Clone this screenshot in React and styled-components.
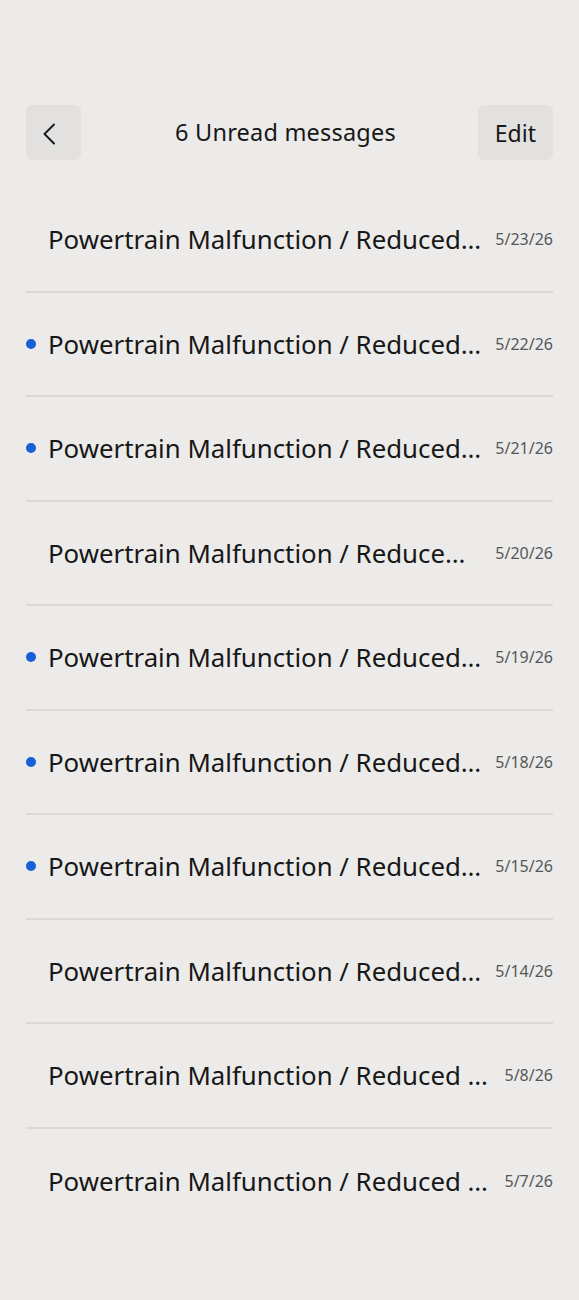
import React from 'react';
import { styled, createGlobalStyle } from 'styled-components';

const GlobalStyle = createGlobalStyle`
    html, body {
        margin: 0;
        padding: 0;
        background-color: #ECEBE9;
    }
    body {
        font-family: "Noto Sans", "Open Sans", sans-serif;
        color: #171717;
    }
`;

const Page = styled.div`
    min-height: 1300px;
    padding: 105px 26px 0 26px;
    box-sizing: border-box;
`;

const Header = styled.header`
    display: grid;
    grid-template-columns: 1fr auto 1fr;
    align-items: center;
    height: 55px;
`;

const HeaderButton = styled.button`
    justify-self: ${({ $end }) => ($end ? 'end' : 'start')};
    height: 55px;
    min-width: 55px;
    padding: 0 ${({ $wide }) => ($wide ? '17px' : '0')};
    border: none;
    border-radius: 6px;
    background-color: #E2E1DF;
    color: #171717;
    font-family: inherit;
    font-size: 23px;
    display: flex;
    align-items: center;
    justify-content: center;
    cursor: pointer;
`;

const Title = styled.h1`
    margin: 0 8px 2px 0;
    font-size: 23.5px;
    font-weight: 400;
    letter-spacing: 0.2px;
`;

const List = styled.ul`
    list-style: none;
    margin: 28px 0 0 0;
    padding: 0;
`;

const Row = styled.li`
    display: flex;
    align-items: center;
    height: 104.5px;
    border-bottom: ${({ $last }) => ($last ? 'none' : '2px solid #DAD9D7')};
    box-sizing: border-box;
`;

const DotSlot = styled.span`
    width: 22px;
    flex-shrink: 0;
    display: flex;
    align-items: center;
`;

const Dot = styled.span`
    width: 10px;
    height: 10px;
    border-radius: 50%;
    background-color: #1660D8;
`;

const Subject = styled.span`
    flex: 1;
    min-width: 0;
    font-size: 25.8px;
    white-space: nowrap;
    overflow: hidden;
    text-overflow: ellipsis;
`;

const DateText = styled.span`
    flex-shrink: 0;
    margin-left: 10px;
    font-size: 16px;
    color: #575757;
`;

const messages = [
    { subject: 'Powertrain Malfunction / Reduced…', date: '5/23/26', unread: false },
    { subject: 'Powertrain Malfunction / Reduced…', date: '5/22/26', unread: true },
    { subject: 'Powertrain Malfunction / Reduced…', date: '5/21/26', unread: true },
    { subject: 'Powertrain Malfunction / Reduce…', date: '5/20/26', unread: false },
    { subject: 'Powertrain Malfunction / Reduced…', date: '5/19/26', unread: true },
    { subject: 'Powertrain Malfunction / Reduced…', date: '5/18/26', unread: true },
    { subject: 'Powertrain Malfunction / Reduced…', date: '5/15/26', unread: true },
    { subject: 'Powertrain Malfunction / Reduced…', date: '5/14/26', unread: false },
    { subject: 'Powertrain Malfunction / Reduced …', date: '5/8/26', unread: false },
    { subject: 'Powertrain Malfunction / Reduced …', date: '5/7/26', unread: false },
];

function BackIcon() {
    return (
        <svg width="24" height="24" viewBox="0 0 24 24" fill="none" style={{ marginLeft: -10, marginTop: 3 }}>
            <path d="M17 2.5 L7.5 12 L17 21.5" stroke="#171717" strokeWidth="1.9" strokeLinecap="round" strokeLinejoin="round" />
        </svg>
    );
}

export default function App() {
    return (
        <>
            <GlobalStyle />
            <Page>
                <Header>
                    <HeaderButton aria-label="Back"><BackIcon /></HeaderButton>
                    <Title>6 Unread messages</Title>
                    <HeaderButton $wide $end>Edit</HeaderButton>
                </Header>
                <List>
                    {messages.map((m, i) => (
                        <Row key={m.date} $last={i === messages.length - 1}>
                            <DotSlot>{m.unread && <Dot />}</DotSlot>
                            <Subject>{m.subject}</Subject>
                            <DateText>{m.date}</DateText>
                        </Row>
                    ))}
                </List>
            </Page>
        </>
    );
}
